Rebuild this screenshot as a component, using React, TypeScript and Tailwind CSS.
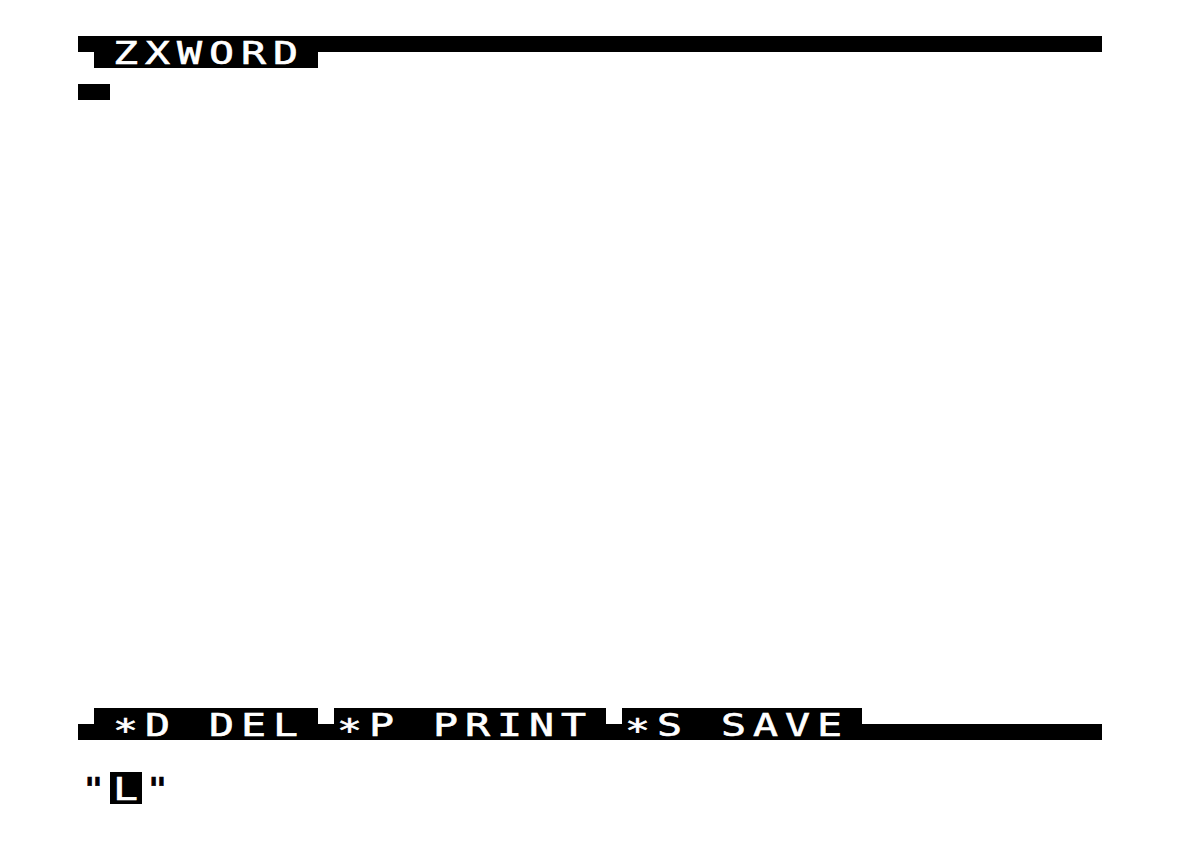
type Cell =
  | { kind: 'blank' }
  | { kind: 'char'; ch: string; inv?: boolean }
  | { kind: 'quad'; q: [number, number, number, number] };

const COLS = 32;
const ROWS = 24;

const blank: Cell = { kind: 'blank' };
const quad = (tl: number, tr: number, bl: number, br: number): Cell => ({ kind: 'quad', q: [tl, tr, bl, br] });
const text = (s: string, inv = false): Cell[] => s.split('').map((ch) => ({ kind: 'char', ch, inv }));
const repeat = (c: Cell, n: number): Cell[] => Array.from({ length: n }, () => c);

function padRow(cells: Cell[]): Cell[] {
  return [...cells, ...repeat(blank, COLS - cells.length)];
}

const screen: Cell[][] = Array.from({ length: ROWS }, () => padRow([]));

// title bar
screen[0] = padRow([quad(1, 1, 0, 1), ...text('ZXWORD', true), quad(1, 1, 1, 0), ...repeat(quad(1, 1, 0, 0), 24)]);
// cursor
screen[1] = padRow([quad(0, 0, 1, 1)]);
// menu bar
screen[21] = padRow([
  quad(0, 1, 1, 1),
  ...text('*D DEL', true),
  quad(1, 0, 1, 1),
  ...text('*P PRINT', true),
  quad(1, 0, 1, 1),
  ...text('*S SAVE', true),
  quad(1, 0, 1, 1),
  ...repeat(quad(0, 0, 1, 1), 7),
]);
// input line
screen[23] = padRow([...text('"'), ...text('L', true), ...text('"')]);

function ScreenCell({ cell }: { cell: Cell }) {
  if (cell.kind === 'blank') return <div className="w-8 h-8" />;
  if (cell.kind === 'quad') {
    return (
      <div className="w-8 h-8 grid grid-cols-2 grid-rows-2">
        {cell.q.map((on, i) => (
          <div key={i} className={on ? 'bg-black' : ''} />
        ))}
      </div>
    );
  }
  const star = cell.ch === '*';
  return (
    <div className={'w-8 h-8 flex items-center justify-center ' + (cell.inv ? 'bg-black text-white' : 'text-black')}>
      <span
        className={
          'text-[32px] leading-none scale-x-[1.3] [-webkit-text-stroke:0.6px_currentColor] ' +
          (star ? 'translate-y-[6px]' : 'translate-y-[1px]')
        }
      >
        {cell.ch === ' ' ? '\u00a0' : cell.ch}
      </span>
    </div>
  );
}

export default function App() {
  return (
    <div className="min-h-[848px] w-[1178px] bg-white pl-[78px] pt-[36px] font-['DejaVu_Sans_Mono',monospace]">
      <div className="w-[1024px] flex flex-col">
        {screen.map((row, r) => (
          <div key={r} className="flex">
            {row.map((cell, c) => (
              <ScreenCell key={c} cell={cell} />
            ))}
          </div>
        ))}
      </div>
    </div>
  );
}
